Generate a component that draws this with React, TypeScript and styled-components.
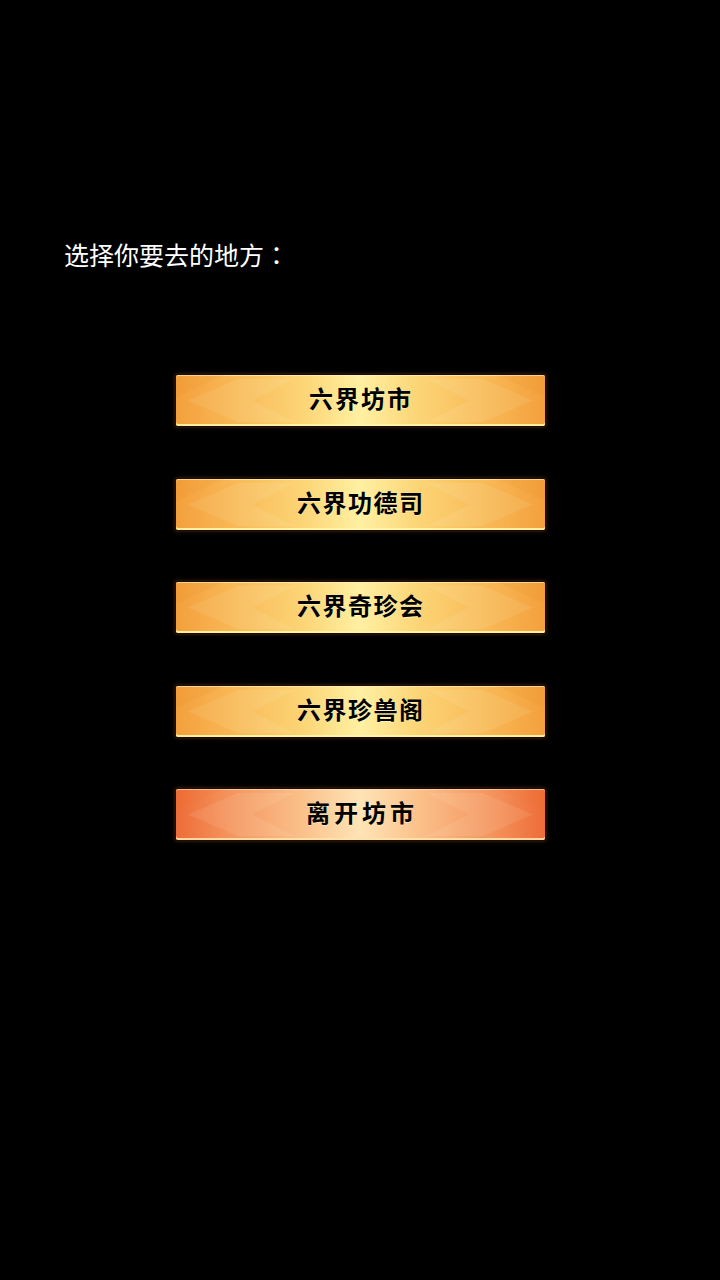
import React from "react";
import styled, { createGlobalStyle } from "styled-components";

const Global = createGlobalStyle`
  html, body { margin: 0; padding: 0; background: #000; }
  body { font-family: "Noto Sans CJK SC", "Noto Sans", sans-serif; }
`;

const Page = styled.div`
  width: 720px;
  height: 1280px;
  background: #000;
  display: flex;
  flex-direction: column;
  box-sizing: border-box;
  padding-top: 236px;
`;

const Title = styled.div`
  padding-left: 64px;
  color: #fff;
  font-family: "Noto Sans CJK TC", "Noto Sans CJK SC", sans-serif;
  font-size: 25px;
  line-height: 36px;
`;

const List = styled.div`
  margin-top: 103px;
  display: flex;
  flex-direction: column;
  align-items: center;
  gap: 52.5px;
`;

const Btn = styled.button<{ $red?: boolean }>`
  position: relative;
  width: 369px;
  height: 51px;
  padding: 0 0 5px 0;
  border: none;
  border-radius: 2px;
  cursor: pointer;
  overflow: hidden;
  background: ${(p) =>
    p.$red
      ? "linear-gradient(90deg, #ee6c38 0%, #f4935c 14%, #fbc08a 34%, #fee4b6 50%, #fbc08a 66%, #f4935c 86%, #ee6c38 100%)"
      : "linear-gradient(90deg, #f3a03c 0%, #f8b653 14%, #fcd475 34%, #fff0a2 50%, #fcd475 66%, #f8b653 86%, #f3a03c 100%)"};
  box-shadow: 0 0 0 1px #1a0d02, 0 0 3px 2px rgba(90, 50, 10, 0.55),
    inset 0 1px 0 ${(p) => (p.$red ? "rgba(255,220,180,0.7)" : "rgba(255,240,190,0.7)")},
    inset 0 -2px 0 ${(p) => (p.$red ? "rgba(255,225,170,0.9)" : "rgba(255,245,170,0.9)")};
  display: flex;
  align-items: center;
  justify-content: center;
`;

const Deco = styled.svg`
  position: absolute;
  inset: 0;
  width: 100%;
  height: 100%;
  pointer-events: none;
`;

const Label = styled.span<{ $spacing: number }>`
  position: relative;
  font-family: "Noto Sans CJK SC", sans-serif;
  font-size: 24px;
  line-height: 1;
  font-weight: 700;
  color: #000;
  letter-spacing: ${(p) => p.$spacing}px;
  margin-right: -${(p) => p.$spacing}px;
  text-shadow: 0 1px 0 rgba(255, 255, 220, 0.5);
`;

const Chevrons: React.FC = () => (
  <Deco viewBox="0 0 369 51" preserveAspectRatio="none">
    <polygon points="12,25.5 62,4 118,4 76,25.5 118,47 62,47" fill="rgba(255,255,230,0.09)" />
    <polygon points="357,25.5 307,4 251,4 293,25.5 251,47 307,47" fill="rgba(255,255,230,0.09)" />
    <polygon points="0,0 48,0 0,22" fill="rgba(220,110,20,0.07)" />
    <polygon points="369,0 321,0 369,22" fill="rgba(220,110,20,0.07)" />
  </Deco>
);

const items: { label: string; red?: boolean; spacing: number }[] = [
  { label: "六界坊市", spacing: 2 },
  { label: "六界功德司", spacing: 1.5 },
  { label: "六界奇珍会", spacing: 1.5 },
  { label: "六界珍兽阁", spacing: 1.5 },
  { label: "离开坊市", red: true, spacing: 4 },
];

export default function App() {
  return (
    <>
      <Global />
      <Page>
        <Title>选择你要去的地方：</Title>
        <List>
          {items.map((it) => (
            <Btn key={it.label} $red={it.red}>
              <Chevrons />
              <Label $spacing={it.spacing}>{it.label}</Label>
            </Btn>
          ))}
        </List>
      </Page>
    </>
  );
}
